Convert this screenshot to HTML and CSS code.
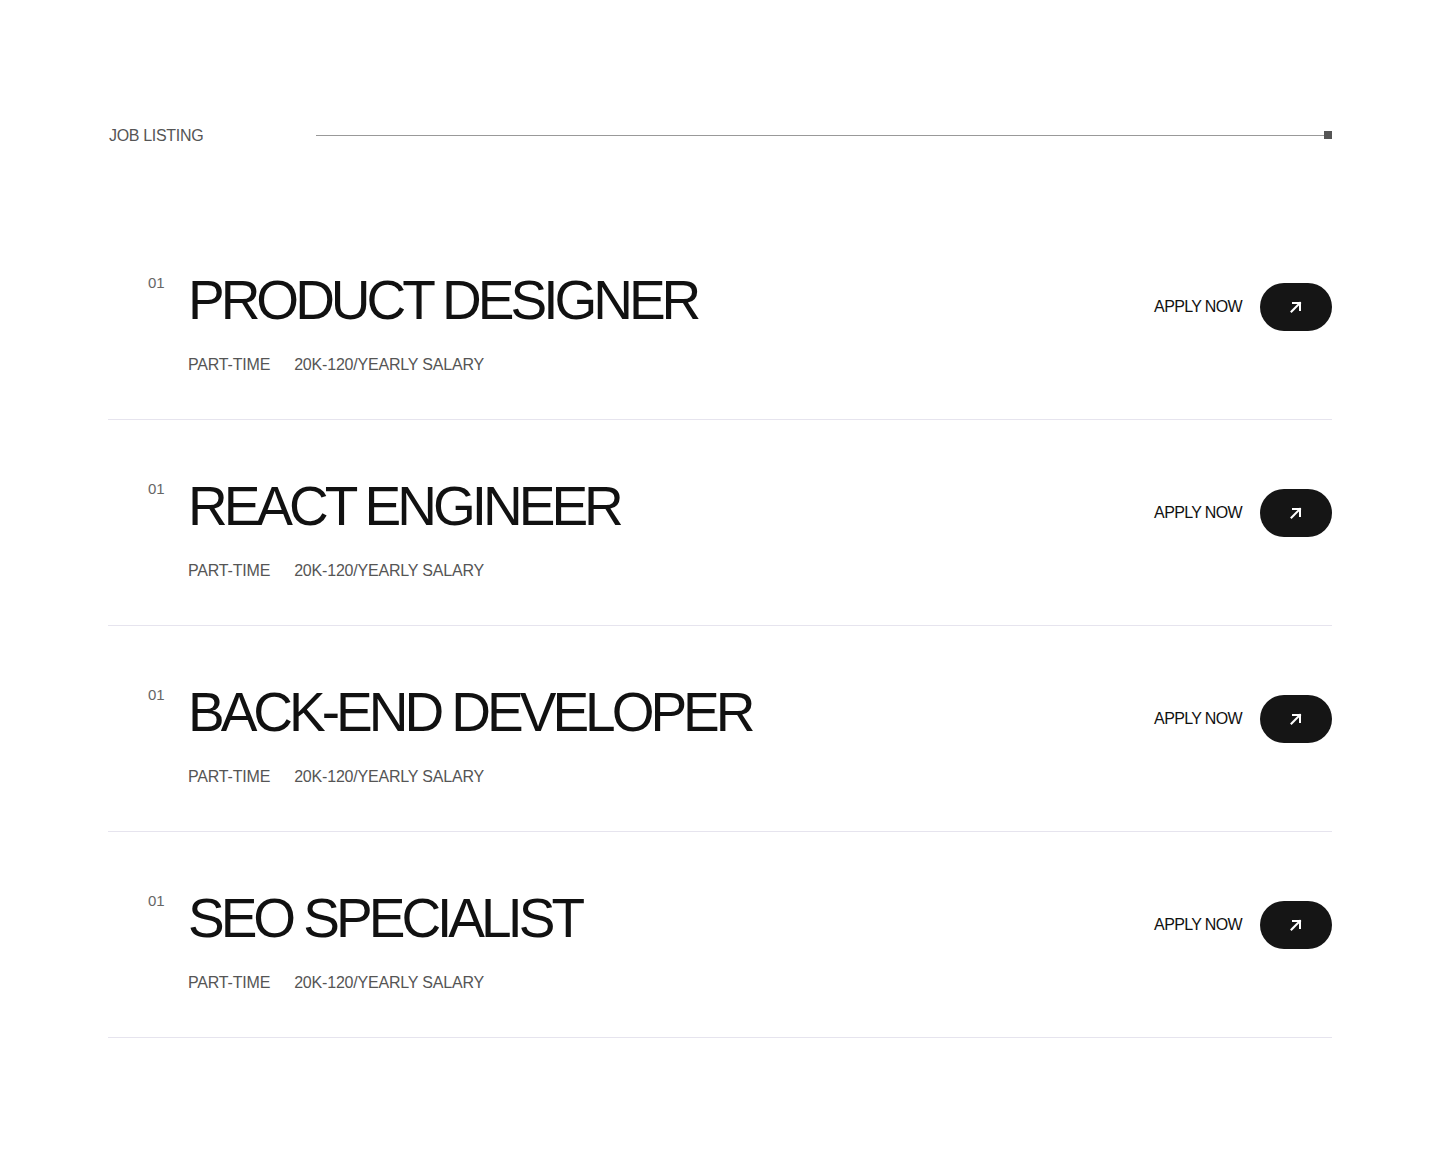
FILE: index.html
```html
<!DOCTYPE html>
<html lang="en">
<head>
  <meta charset="UTF-8">
  <meta name="viewport" content="width=device-width, initial-scale=1">
  <title>Job Listing</title>
  <link rel="stylesheet" href="styles.css">
</head>
<body>

  <div class="page">
    <div class="section-head">
      <span class="section-label">JOB LISTING</span>
      <span class="section-rule"></span>
      <span class="section-dot"></span>
    </div>

    <div class="jobs">
      <div class="job">
        <span class="job-num">01</span>
        <div class="job-main">
          <h2 class="job-title">PRODUCT DESIGNER</h2>
          <div class="job-meta">
            <span>PART-TIME</span>
            <span>20K-120/YEARLY SALARY</span>
          </div>
        </div>
        <a class="job-apply" href="#">
          <span>APPLY NOW</span>
          <span class="btn-arrow">
            <svg width="12" height="12" viewBox="0 0 12 12" fill="none" stroke="#fff" stroke-width="2" stroke-linecap="square">
              <path d="M1.5 10.5 L10 2"/>
              <path d="M3 2 H10 V9"/>
            </svg>
          </span>
        </a>
      </div>

      <div class="job">
        <span class="job-num">01</span>
        <div class="job-main">
          <h2 class="job-title">REACT ENGINEER</h2>
          <div class="job-meta">
            <span>PART-TIME</span>
            <span>20K-120/YEARLY SALARY</span>
          </div>
        </div>
        <a class="job-apply" href="#">
          <span>APPLY NOW</span>
          <span class="btn-arrow">
            <svg width="12" height="12" viewBox="0 0 12 12" fill="none" stroke="#fff" stroke-width="2" stroke-linecap="square">
              <path d="M1.5 10.5 L10 2"/>
              <path d="M3 2 H10 V9"/>
            </svg>
          </span>
        </a>
      </div>

      <div class="job">
        <span class="job-num">01</span>
        <div class="job-main">
          <h2 class="job-title">BACK-END DEVELOPER</h2>
          <div class="job-meta">
            <span>PART-TIME</span>
            <span>20K-120/YEARLY SALARY</span>
          </div>
        </div>
        <a class="job-apply" href="#">
          <span>APPLY NOW</span>
          <span class="btn-arrow">
            <svg width="12" height="12" viewBox="0 0 12 12" fill="none" stroke="#fff" stroke-width="2" stroke-linecap="square">
              <path d="M1.5 10.5 L10 2"/>
              <path d="M3 2 H10 V9"/>
            </svg>
          </span>
        </a>
      </div>

      <div class="job">
        <span class="job-num">01</span>
        <div class="job-main">
          <h2 class="job-title">SEO SPECIALIST</h2>
          <div class="job-meta">
            <span>PART-TIME</span>
            <span>20K-120/YEARLY SALARY</span>
          </div>
        </div>
        <a class="job-apply" href="#">
          <span>APPLY NOW</span>
          <span class="btn-arrow">
            <svg width="12" height="12" viewBox="0 0 12 12" fill="none" stroke="#fff" stroke-width="2" stroke-linecap="square">
              <path d="M1.5 10.5 L10 2"/>
              <path d="M3 2 H10 V9"/>
            </svg>
          </span>
        </a>
      </div>
    </div>
  </div>

</body>
</html>
```

FILE: styles.css
```css
body {
  margin: 0;
  padding: 0;
  font-family: "Liberation Sans", Arial, sans-serif;
  background-color: #fff;
  color: #111;
}

.page {
  width: 1224px;
  margin: 0 auto;
  padding-top: 128px;
}

/* header: label, long rule, small square cap */
.section-head {
  display: flex;
  align-items: center;
  height: 16px;
  margin-bottom: 70px;
}

.section-label {
  width: 208px;
  padding-left: 1px;
  font-size: 16px;
  line-height: 1;
  color: #555;
  letter-spacing: -0.02em;
}

.section-rule {
  flex: 1;
  height: 1px;
  margin-left: -1px;
  margin-bottom: 2px;
  background: #999;
}

.section-dot {
  width: 8px;
  height: 8px;
  margin-bottom: 2px;
  background: #555;
}

.job {
  display: flex;
  align-items: flex-start;
  padding: 59px 0 46px;
  border-bottom: 1px solid #e6e4ee;
}

.job-num {
  width: 40px;
  margin-left: 40px;
  margin-top: 2px;
  font-size: 15px;
  line-height: 1;
  color: #666;
}

.job-main {
  flex: 1;
}

.job-title {
  margin: 0;
  font-size: 55px;
  font-weight: 400;
  line-height: 1;
  letter-spacing: -0.073em;
  color: #111;
}

.job-meta {
  display: flex;
  gap: 24px;
  margin-top: 29px;
  font-size: 16px;
  line-height: 1;
  color: #555;
  letter-spacing: -0.012em;
}

.job-apply {
  display: flex;
  align-items: center;
  gap: 18px;
  margin-top: 10px;
  font-size: 16px;
  letter-spacing: -0.04em;
  color: #111;
  text-decoration: none;
}

.btn-arrow {
  display: flex;
  align-items: center;
  justify-content: center;
  width: 72px;
  height: 48px;
  border-radius: 24px;
  background: #151515;
}
```
